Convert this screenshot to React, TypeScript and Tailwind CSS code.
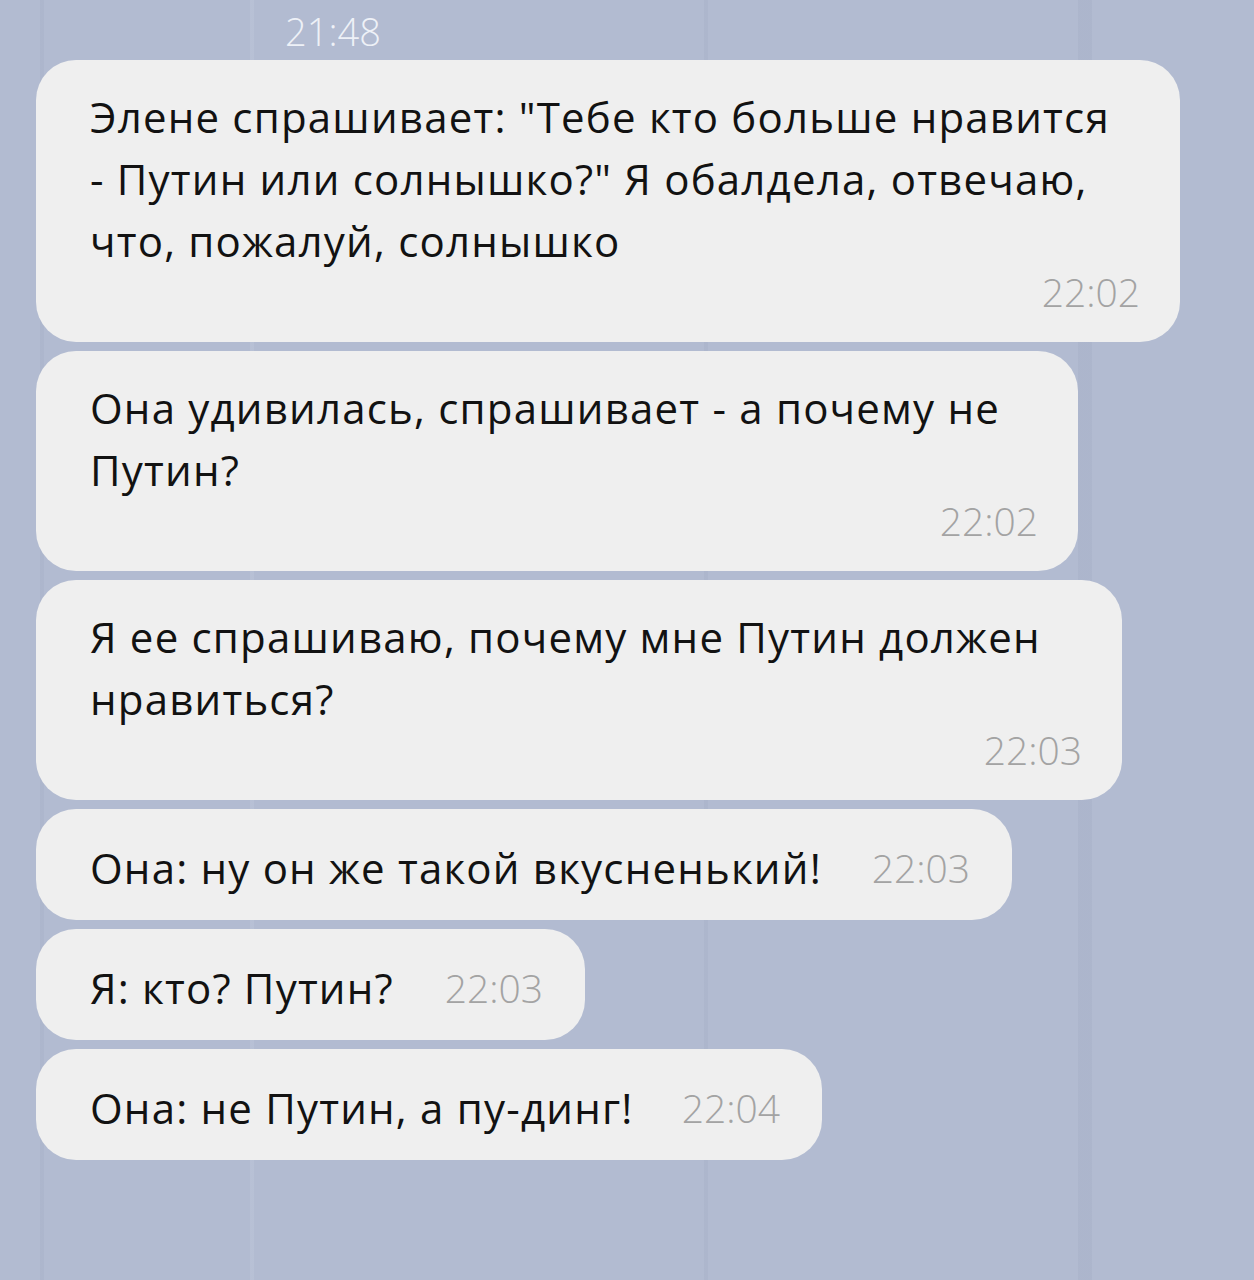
type Message = {
  text: string;
  time: string;
  inline?: boolean;
};

const messages: Message[] = [
  {
    text: 'Элене спрашивает: "Тебе кто больше нравится - Путин или солнышко?" Я обалдела, отвечаю, что, пожалуй, солнышко',
    time: '22:02',
  },
  { text: 'Она удивилась, спрашивает - а почему не Путин?', time: '22:02' },
  { text: 'Я ее спрашиваю, почему мне Путин должен нравиться?', time: '22:03' },
  { text: 'Она: ну он же такой вкусненький!', time: '22:03', inline: true },
  { text: 'Я: кто? Путин?', time: '22:03', inline: true },
  { text: 'Она: не Путин, а пу-динг!', time: '22:04', inline: true },
];

const Bubble = ({ msg, width }: { msg: Message; width: string }) => {
  if (msg.inline) {
    return (
      <div className={`${width} rounded-[40px] bg-[#efefef] pl-[54px] pr-[42px] pt-[28px] pb-[21px] flex items-center`}>
        <span className="text-[42px] leading-[62px] tracking-[1.2px] text-[#121212] whitespace-nowrap">{msg.text}</span>
        <span className="ml-auto text-[39px] leading-[62px] font-light text-[#a3a3a3]">{msg.time}</span>
      </div>
    );
  }
  return (
    <div className={`${width} rounded-[40px] bg-[#efefef] pl-[54px] pr-[40px] pt-[26px] pb-[30px]`}>
      <p className="text-[42px] leading-[62px] tracking-[1.2px] text-[#121212] pr-[10px]">{msg.text}</p>
      <div className="flex justify-end">
        <span className="text-[39px] leading-[40px] font-light text-[#a3a3a3]">{msg.time}</span>
      </div>
    </div>
  );
};

const widths = ['w-[1144px]', 'w-[1042px]', 'w-[1086px]', 'w-[976px]', 'w-[549px]', 'w-[786px]'];

export default function App() {
  return (
    <div
      className="w-[1254px] h-[1280px] overflow-hidden bg-[#b2bbd1] bg-[linear-gradient(90deg,transparent_40px,rgba(150,160,185,0.18)_40px,rgba(150,160,185,0.18)_44px,transparent_44px,transparent_250px,rgba(200,208,225,0.25)_250px,rgba(200,208,225,0.25)_254px,transparent_254px,transparent_704px,rgba(150,160,185,0.18)_704px,rgba(150,160,185,0.18)_708px,transparent_708px,transparent_1078px,rgba(150,160,185,0.2)_1078px,rgba(150,160,185,0.2)_1092px,transparent_1092px)]"
      style={{ fontFamily: '"Open Sans", "Noto Sans", sans-serif' }}
    >
      <div className="pl-[285px] pt-[11px] h-[60px]">
        <span className="text-[38px] leading-[40px] text-[#eef1f7] font-light">21:48</span>
      </div>
      <div className="flex flex-col items-start gap-[9px] pl-[36px]">
        {messages.map((m, i) => (
          <Bubble key={i} msg={m} width={widths[i]} />
        ))}
      </div>
    </div>
  );
}
